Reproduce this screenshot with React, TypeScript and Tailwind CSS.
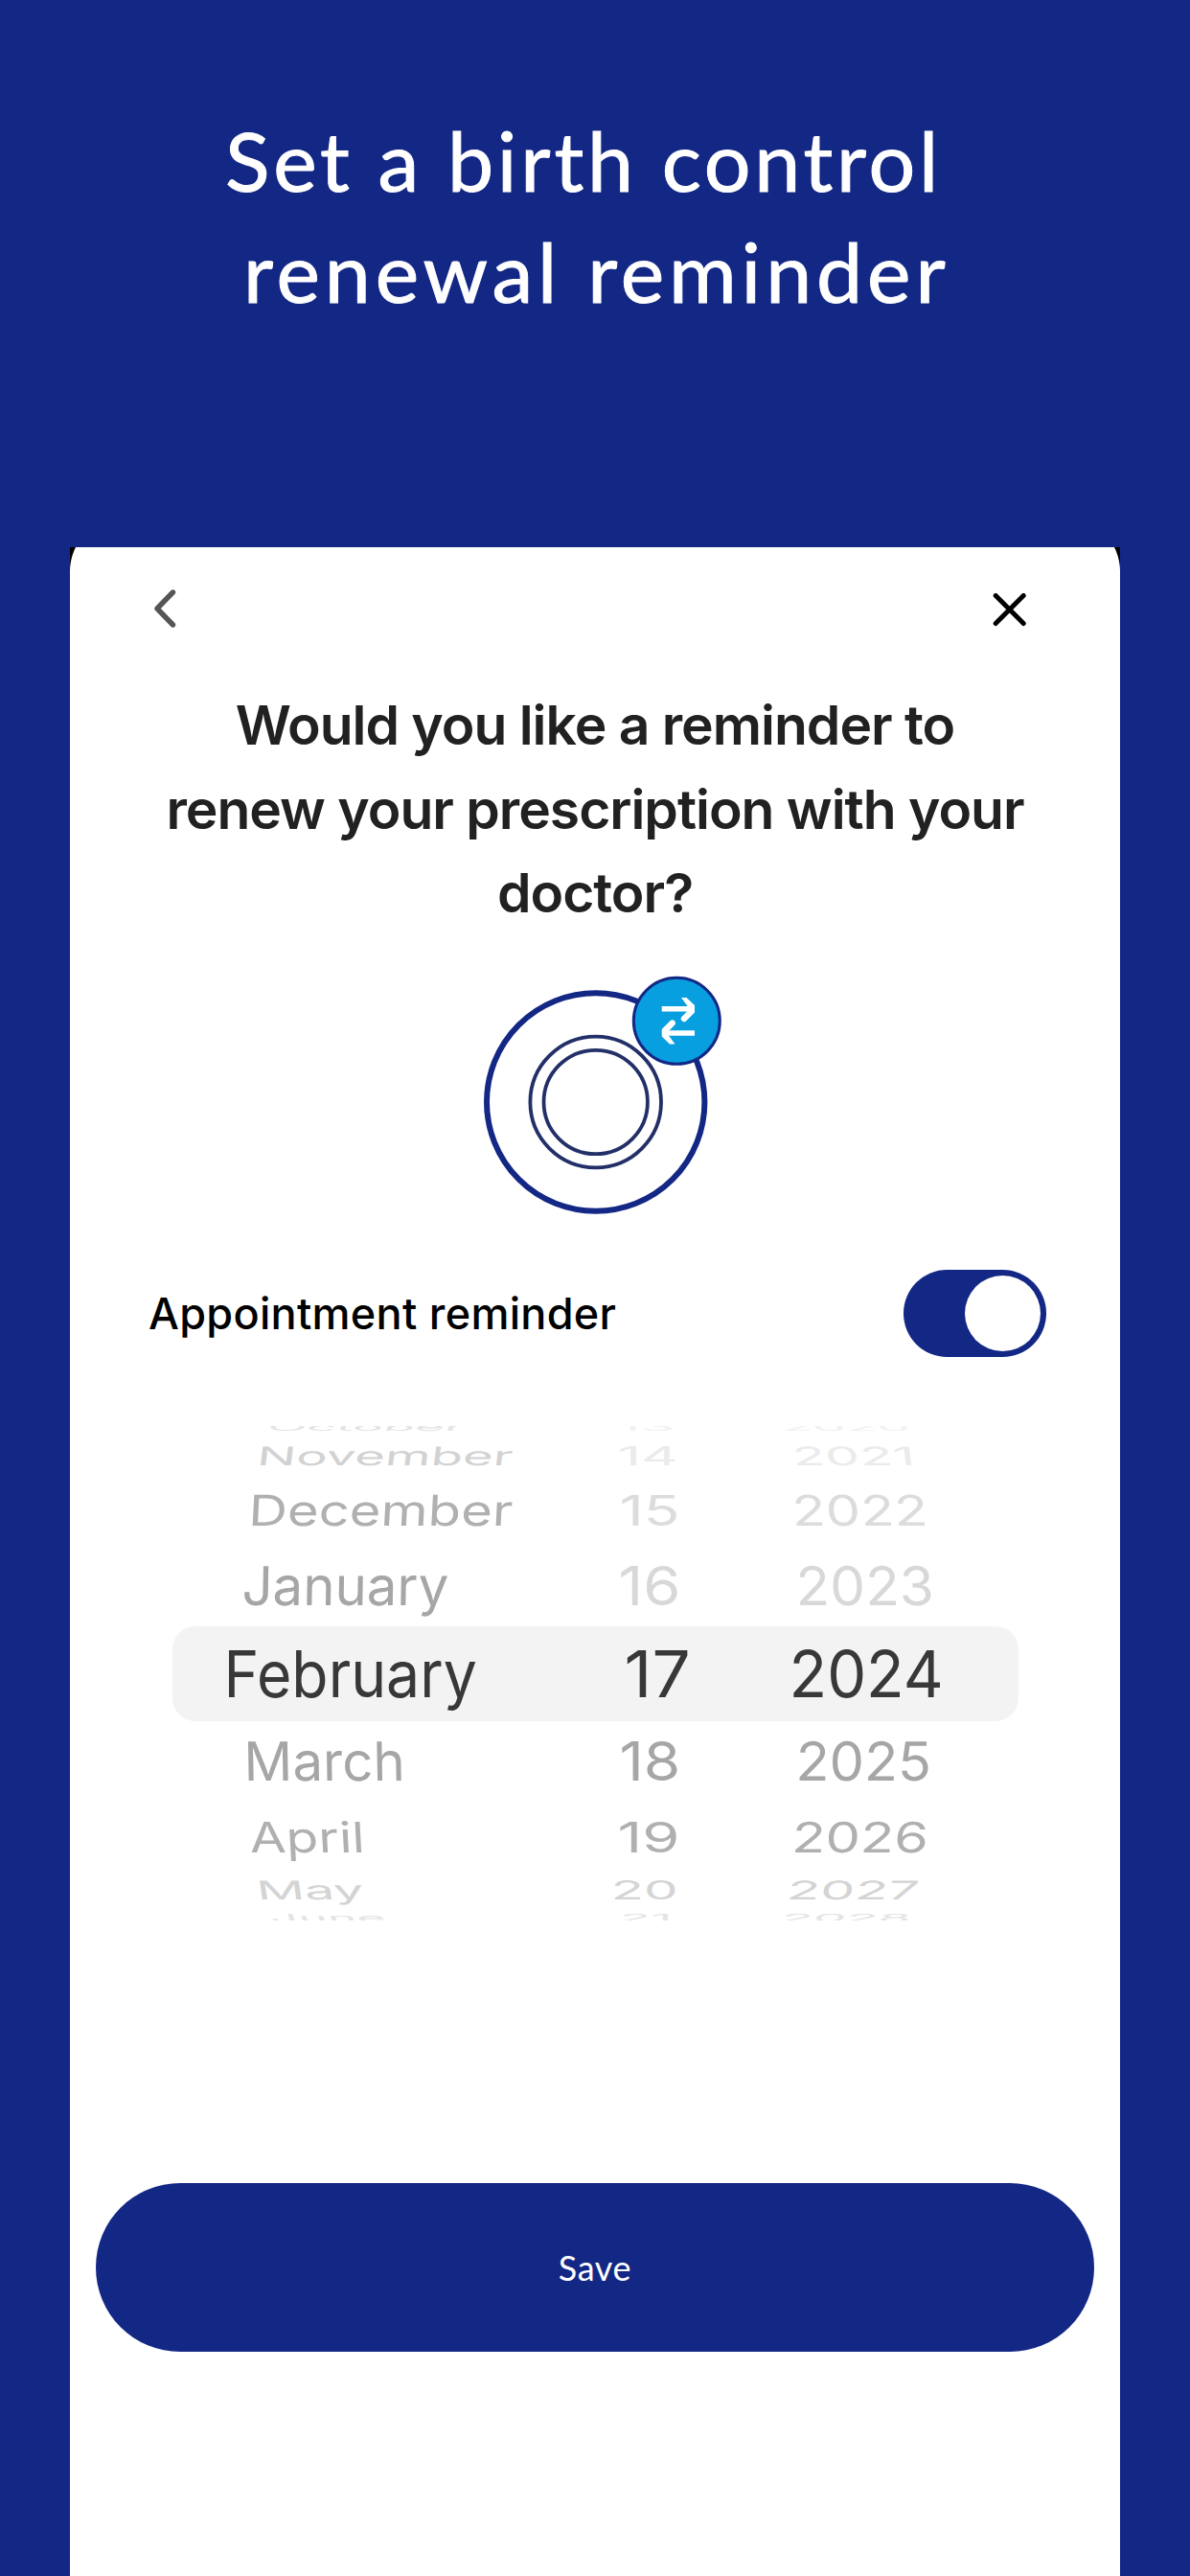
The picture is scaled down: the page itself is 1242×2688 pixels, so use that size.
import React, { useLayoutEffect, useRef, useState } from 'react';

interface Cell {
  text: string;
  left: number;
  width: number;
}

interface WheelRow {
  height: string;
  squash: number;
  tilt: number;
  cells: Cell[];
  colors: string[];
}

const cell = (text: string, left: number, right: number): Cell => ({
  text,
  left,
  width: right - left,
});

const wheelRows: WheelRow[] = [
  {
    height: '-mt-[7px] h-[18px]',
    squash: 0.16,
    tilt: -20,
    cells: [cell('October', 283, 482), cell('13', 648, 702), cell('2020', 818, 947)],
    colors: ['text-[#e4e4e4]', 'text-[#f1f1f1]', 'text-[#f1f1f1]'],
  },
  {
    height: 'h-[41px]',
    squash: 0.4,
    tilt: -7,
    cells: [cell('November', 272, 533), cell('14', 648, 706), cell('2021', 830, 952)],
    colors: ['text-[#d2d2d2]', 'text-[#ebebeb]', 'text-[#ebebeb]'],
  },
  {
    height: 'h-[72px]',
    squash: 0.66,
    tilt: -3,
    cells: [cell('December', 263, 533), cell('15', 650, 707), cell('2022', 830, 966)],
    colors: ['text-[#b0b0b0]', 'text-[#dcdcdc]', 'text-[#dcdcdc]'],
  },
  {
    height: 'h-[85px]',
    squash: 0.835,
    tilt: -1,
    cells: [cell('January', 256, 466), cell('16', 649, 708), cell('2023', 834, 972)],
    colors: ['text-[#a6a6a6]', 'text-[#d8d8d8]', 'text-[#d8d8d8]'],
  },
  {
    height: 'h-[99px]',
    squash: 1,
    tilt: 0,
    cells: [cell('February', 237, 495), cell('17', 655, 718), cell('2024', 827, 982)],
    colors: ['text-[#383838]', 'text-[#383838]', 'text-[#383838]'],
  },
  {
    height: 'h-[84px]',
    squash: 0.835,
    tilt: 1,
    cells: [cell('March', 258, 420), cell('18', 650, 708), cell('2025', 834, 970)],
    colors: ['text-[#a6a6a6]', 'text-[#a6a6a6]', 'text-[#a6a6a6]'],
  },
  {
    height: 'h-[74px]',
    squash: 0.655,
    tilt: 3,
    cells: [cell('April', 264, 378), cell('19', 648, 707), cell('2026', 830, 967)],
    colors: ['text-[#b0b0b0]', 'text-[#b0b0b0]', 'text-[#b0b0b0]'],
  },
  {
    height: 'h-[38px]',
    squash: 0.4,
    tilt: 8,
    cells: [cell('May', 271, 377), cell('20', 641, 705), cell('2027', 825, 957)],
    colors: ['text-[#d4d4d4]', 'text-[#d4d4d4]', 'text-[#d4d4d4]'],
  },
  {
    height: 'h-[20px]',
    squash: 0.16,
    tilt: 20,
    cells: [cell('June', 285, 400), cell('21', 650, 699), cell('2028', 819, 948)],
    colors: ['text-[#e4e4e4]', 'text-[#e4e4e4]', 'text-[#e4e4e4]'],
  },
];

// left edges of the three wheel columns, in page pixels
const columnStart = [180, 600, 780];
const columnTilt = [1, 0, -1];

interface WheelLabelProps {
  cell: Cell;
  column: number;
  squash: number;
  tilt: number;
  color: string;
}

const WheelLabel = ({ cell, column, squash, tilt, color }: WheelLabelProps) => {
  const ref = useRef<HTMLSpanElement>(null);
  const [stretch, setStretch] = useState(1);

  // glyph side bearings take a few pixels on each label
  useLayoutEffect(() => {
    if (ref.current) {
      setStretch((cell.width + 6) / ref.current.offsetWidth);
    }
  }, [cell.width]);

  return (
    <span
      ref={ref}
      className={`origin-left text-[67px] leading-none whitespace-nowrap ${color}`}
      style={{
        transform: `translateX(${cell.left - 3.5 - columnStart[column]}px) skewX(${
          tilt * columnTilt[column]
        }deg) scale(${stretch}, ${squash})`,
      }}
    >
      {cell.text}
    </span>
  );
};

const DateWheel = () => (
  <div className="mt-[72px] ml-[107px] h-[516px] w-[883px] overflow-hidden">
    {wheelRows.map((row) => (
      <div
        key={row.cells[0].text}
        className={`grid grid-cols-[420px_180px_283px] ${row.height} ${
          row.squash === 1 ? 'rounded-[24px] bg-[#f3f3f3]' : ''
        }`}
      >
        {row.cells.map((item, column) => (
          <div key={item.text} className="flex h-full min-h-0 items-center">
            <WheelLabel
              cell={item}
              column={column}
              squash={row.squash}
              tilt={row.tilt}
              color={row.colors[column]}
            />
          </div>
        ))}
      </div>
    ))}
  </div>
);

const RingIcon = () => (
  <svg className="mx-auto block h-[260px] w-[268px]" viewBox="487 1010 268 260" fill="none">
    <circle cx="621.7" cy="1150" r="113.7" stroke="#132785" strokeWidth="6" />
    <circle cx="621.7" cy="1150" r="68.3" stroke="#233068" strokeWidth="3.8" />
    <circle cx="621.7" cy="1150" r="54.2" stroke="#233068" strokeWidth="3.8" />
    <circle cx="706.3" cy="1065.3" r="45" fill="#089fe0" stroke="#132785" strokeWidth="3" />
    <g stroke="#fff" strokeWidth="5.6">
      <path d="M690.7 1052.7H723" />
      <path d="M725 1078H692" />
    </g>
    <g fill="#fff">
      <path d="M711 1041h5.5l8.5 8v7.500l-9 9a3.200 3.200 0 0 1-4.500-4.500l8.200-8.300z" />
      <path d="M704.500 1089.600h-5.500l-8.300-8v-7.500l9-9a3.200 3.200 0 0 1 4.500 4.500l-8.200 8.500z" />
    </g>
  </svg>
);

const App = () => {
  return (
    <div className="flex h-[2688px] w-[1242px] flex-col overflow-hidden bg-[#132785]">
      <h1 className="h-[571px] pt-[109px] font-['Lato',sans-serif] text-[86px] leading-[116px] whitespace-nowrap text-white [-webkit-text-stroke:1px_white]">
        <span className="ml-[235px] block tracking-[3.800px]">Set a birth control</span>
        <span className="ml-[254px] block tracking-[4.900px]">renewal reminder</span>
      </h1>
      <main className="mx-[73px] flex-1 overflow-hidden bg-black font-['Inter',sans-serif]">
        <div className="-mt-[30px] h-[2200px] rounded-t-[55px] bg-white pt-[30px]">
          <div className="flex items-start justify-between pt-11 pr-[97px] pl-[87px]">
            <svg className="h-10 w-6" viewBox="0 0 24 40" fill="none">
              <path
                d="M20.500 3 4 20l16.500 17"
                stroke="#555"
                strokeWidth="5.400"
                strokeLinecap="round"
                strokeLinejoin="round"
              />
            </svg>
            <svg className="mt-1 h-[36px] w-[36px]" viewBox="0 0 36 36" fill="none">
              <path
                d="M3.200 2.500l29 29M32.200 2.500l-29 29"
                stroke="#000"
                strokeWidth="5"
                strokeLinecap="round"
              />
            </svg>
          </div>
          <h2 className="mt-[58px] text-center text-[57px] leading-[87.600px] font-semibold tracking-[-1.020px] whitespace-nowrap text-[#212121]">
            Would you like a reminder to
            <br />
            renew your prescription with your
            <br />
            doctor?
          </h2>
          <div className="mt-[34px]">
            <RingIcon />
          </div>
          <div className="mt-[55px] flex items-center justify-between pr-[77px] pl-[82px]">
            <span className="text-[45px] leading-none font-medium tracking-[0.300px] text-black">
              Appointment reminder
            </span>
            <div className="flex h-[91px] w-[149px] items-center justify-end rounded-full bg-[#132785] pr-[6px]">
              <div className="h-[79px] w-[79px] rounded-full bg-white" />
            </div>
          </div>
          <DateWheel />
          <button className="mx-auto mt-[274px] block h-[176px] w-[1042px] rounded-full bg-[#132785] font-['Lato',sans-serif] text-[36px] tracking-[0.600px] text-white">
            Save
          </button>
        </div>
      </main>
    </div>
  );
};

export default App;
